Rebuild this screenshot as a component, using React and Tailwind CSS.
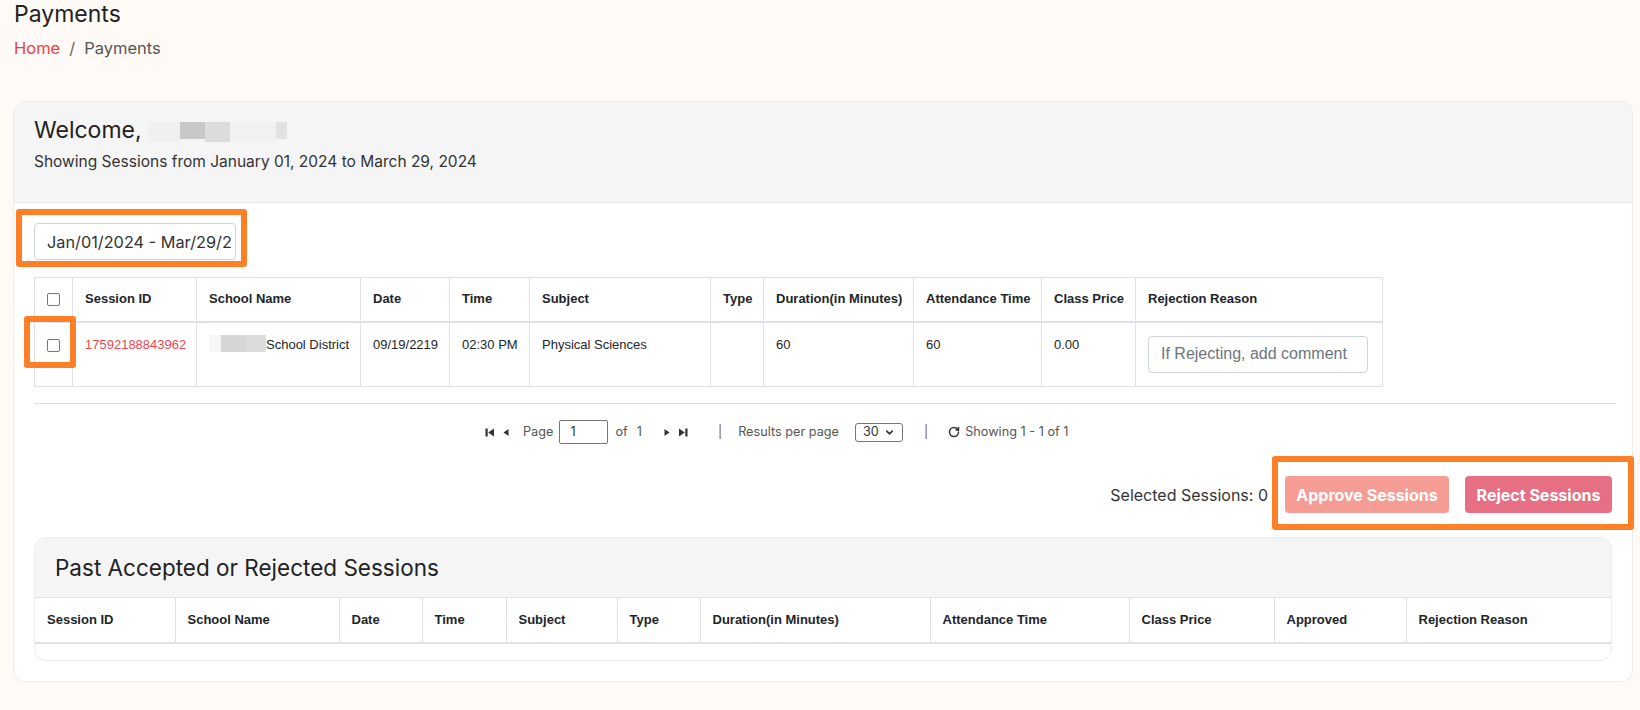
import React from 'react';
import { RotateCw, ChevronDown } from 'lucide-react';

const sessionCols = [
  { label: 'Session ID', w: 'w-[124px]' },
  { label: 'School Name', w: 'w-[164px]' },
  { label: 'Date', w: 'w-[89px]' },
  { label: 'Time', w: 'w-[80px]' },
  { label: 'Subject', w: 'w-[181px]' },
  { label: 'Type', w: 'w-[53px]' },
  { label: 'Duration(in Minutes)', w: 'w-[150px]' },
  { label: 'Attendance Time', w: 'w-[128px]' },
  { label: 'Class Price', w: 'w-[94px]' },
  { label: 'Rejection Reason', w: 'w-[247px]' },
];

const pastCols = [
  { label: 'Session ID', w: 'w-[140px]' },
  { label: 'School Name', w: 'w-[164px]' },
  { label: 'Date', w: 'w-[83px]' },
  { label: 'Time', w: 'w-[84px]' },
  { label: 'Subject', w: 'w-[111px]' },
  { label: 'Type', w: 'w-[83px]' },
  { label: 'Duration(in Minutes)', w: 'w-[230px]' },
  { label: 'Attendance Time', w: 'w-[199px]' },
  { label: 'Class Price', w: 'w-[145px]' },
  { label: 'Approved', w: 'w-[132px]' },
  { label: 'Rejection Reason', w: 'w-[205px]' },
];

const Checkbox = () => (
  <span className="inline-block w-[13px] h-[13px] border border-[#767676] rounded-[2px] bg-white align-middle" />
);

const NavIcon = ({ dir = 'left', bar = false }) => (
  <svg width="10" height="11" viewBox="0 0 10 11" className="text-[#333]">
    {dir === 'left' ? (
      <>
        {bar && <rect x="0.5" y="1.5" width="2.2" height="8" fill="currentColor" />}
        <path d={bar ? 'M9 1.5 L3.2 5.5 L9 9.5 Z' : 'M7.5 2 L2.5 5.5 L7.5 9 Z'} fill="currentColor" />
      </>
    ) : (
      <>
        {bar && <rect x="7.3" y="1.5" width="2.2" height="8" fill="currentColor" />}
        <path d={bar ? 'M1 1.5 L6.8 5.5 L1 9.5 Z' : 'M2.5 2 L7.5 5.5 L2.5 9 Z'} fill="currentColor" />
      </>
    )}
  </svg>
);

const App = () => {
  return (
    <div className="min-h-screen bg-[#fffaf6] font-['Inter',sans-serif] text-[#333] pb-6">
      {/* Page title */}
      <div className="px-[14px]">
        <h1 className="text-[23px] leading-[28px] text-[#222]">Payments</h1>
        <div className="flex items-center gap-[9px] text-[16.5px] leading-[20px] mt-[10px]">
          <span className="text-[#ef4040]">Home</span>
          <span className="text-[#666]">/</span>
          <span className="text-[#555]">Payments</span>
        </div>
      </div>

      {/* Main card */}
      <div className="ml-[13px] mt-[43px] w-[1620px] bg-white border border-[#ececec] rounded-xl">
        <div className="bg-[#f5f5f5] border-b border-[#e6e6e6] h-[101px] px-5 pt-[14px] rounded-t-xl">
          <div className="flex items-center">
            <span className="text-[23px] leading-[28px] text-[#222]">Welcome,</span>
            <div className="flex items-start ml-[6px] mt-[4px]">
              <div className="w-[32px] h-[20px] bg-[#f0f0f0]" />
              <div className="w-[25px] h-[17px] bg-[#c8c8c8]" />
              <div className="w-[25px] h-[20px] bg-[#dcdcdc]" />
              <div className="w-[46px] h-[20px] bg-[#f1f1f1]" />
              <div className="w-[11px] h-[17px] bg-[#e2e2e2]" />
            </div>
          </div>
          <p className="text-[15.5px] leading-[22px] mt-[7px] text-[#333]">
            Showing Sessions from January 01, 2024 to March 29, 2024
          </p>
        </div>

        <div className="px-5 pt-5 pb-5">
          {/* Date range */}
          <div className="relative w-[202px]">
            <input
              readOnly
              value="Jan/01/2024 - Mar/29/2024"
              className="block w-full h-[37px] border border-[#cfd4dc] rounded-[4px] pl-[12px] pr-[3px] text-[16.3px] text-[#333] bg-white outline-none"
            />
            <div className="absolute -left-[18px] -right-[11px] -top-[14px] -bottom-[7px] border-[6px] border-[#fd7f28] rounded-[3px] pointer-events-none" />
          </div>

          {/* Sessions table */}
          <div className="relative mt-[17px] w-[1348px]">
            <table className="border-collapse table-fixed w-[1348px] font-['Liberation_Sans',Arial,sans-serif] text-[13px] leading-[18px] text-[#212529]">
              <thead>
                <tr>
                  <th className="w-[38px] border border-[#dee2e6] border-b-2 h-[44px] text-center align-middle">
                    <Checkbox />
                  </th>
                  {sessionCols.map((c) => (
                    <th
                      key={c.label}
                      className={`${c.w} border border-[#dee2e6] border-b-2 px-3 h-[44px] text-left font-bold whitespace-nowrap`}
                    >
                      {c.label}
                    </th>
                  ))}
                </tr>
              </thead>
              <tbody>
                <tr>
                  <td className="border border-[#dee2e6] text-center align-top pt-[13px] h-[65px]">
                    <Checkbox />
                  </td>
                  <td className="border border-[#dee2e6] px-3 pt-[13px] align-top text-[#f0454f]">17592188843962</td>
                  <td className="border border-[#dee2e6] px-3 pt-[13px] align-top whitespace-nowrap">
                    <span className="inline-flex items-center align-middle -mt-[3px]">
                      <span className="inline-block w-[12px] h-[17px] bg-[#f6f6f6]" />
                      <span className="inline-block w-[25px] h-[17px] bg-[#d6d6d6]" />
                      <span className="inline-block w-[20px] h-[17px] bg-[#dcdcdc]" />
                    </span>
                    School District
                  </td>
                  <td className="border border-[#dee2e6] px-3 pt-[13px] align-top">09/19/2219</td>
                  <td className="border border-[#dee2e6] px-3 pt-[13px] align-top whitespace-nowrap">02:30 PM</td>
                  <td className="border border-[#dee2e6] px-3 pt-[13px] align-top">Physical Sciences</td>
                  <td className="border border-[#dee2e6] px-3 pt-[13px] align-top"></td>
                  <td className="border border-[#dee2e6] px-3 pt-[13px] align-top">60</td>
                  <td className="border border-[#dee2e6] px-3 pt-[13px] align-top">60</td>
                  <td className="border border-[#dee2e6] px-3 pt-[13px] align-top">0.00</td>
                  <td className="border border-[#dee2e6] px-3 pt-[13px] pb-[13px] align-top">
                    <input
                      placeholder="If Rejecting, add comment"
                      className="block h-[37px] w-[220px] border border-[#ced4da] rounded-[4px] px-[12px] text-[16px] text-[#333] placeholder:text-[#6c757d] bg-white outline-none font-['Liberation_Sans',Arial,sans-serif]"
                    />
                  </td>
                </tr>
              </tbody>
            </table>
            <div className="absolute -left-[10px] top-[39px] w-[52px] h-[52px] border-[6px] border-[#fd7f28] rounded-[3px] pointer-events-none" />
          </div>

          <div className="mt-4 border-t border-[#dee2e6] -mr-1" />

          {/* Pagination */}
          <div className="mt-4 pl-[451px] flex items-center text-[12.7px] text-[#555] h-[24px]">
            <div className="flex items-center gap-[6px]">
              <NavIcon dir="left" bar />
              <NavIcon dir="left" />
            </div>
            <span className="ml-[12px]">Page</span>
            <div className="ml-[6px] w-[49px] h-[24px] border border-[#767676] rounded-[2px] bg-white flex items-center px-[10px] text-[#333]">
              1
            </div>
            <span className="ml-[7px]">of</span>
            <span className="ml-[9px]">1</span>
            <div className="ml-[20px] flex items-center gap-[6px]">
              <NavIcon dir="right" />
              <NavIcon dir="right" bar />
            </div>
            <span className="ml-[30px] text-[#8a5a2b]">|</span>
            <span className="ml-[16px]">Results per page</span>
            <div className="ml-[16px] w-[48px] h-[19px] border border-[#767676] rounded-[3px] bg-white flex items-center justify-between px-[7px] text-[#333]">
              <span>30</span>
              <ChevronDown className="w-[11px] h-[11px]" strokeWidth={3.5} />
            </div>
            <span className="ml-[21px] text-[#8a5a2b]">|</span>
            <RotateCw className="ml-[20px] w-[12px] h-[12px] text-[#333]" strokeWidth={3} />
            <span className="ml-[5px]">Showing 1 - 1 of 1</span>
          </div>

          {/* Actions */}
          <div className="mt-[32px] flex items-center justify-end">
            <span className="text-[16px] text-[#333] mr-[17px]">Selected Sessions: 0</span>
            <div className="relative flex items-center gap-4">
              <button className="h-[37px] w-[164px] rounded-[4px] bg-[#f59c95] text-white font-bold text-[16px]">
                Approve Sessions
              </button>
              <button className="h-[37px] w-[147px] rounded-[4px] bg-[#e66f84] text-white font-bold text-[16px]">
                Reject Sessions
              </button>
              <div className="absolute -left-[13px] -right-[22px] -top-[20px] -bottom-[17px] border-[6px] border-[#fd7f28] rounded-[3px] pointer-events-none" />
            </div>
          </div>

          {/* Past sessions */}
          <div className="mt-[24px] border border-[#ececec] rounded-xl overflow-hidden">
            <div className="bg-[#f5f5f5] h-[59px] px-5 flex items-center">
              <h2 className="text-[22.5px] text-[#222]">Past Accepted or Rejected Sessions</h2>
            </div>
            <table className="border-collapse table-fixed w-full font-['Liberation_Sans',Arial,sans-serif] text-[13px] text-[#212529]">
              <thead>
                <tr>
                  {pastCols.map((c, i) => (
                    <th
                      key={c.label}
                      className={`${c.w} border-t border-r border-[#dee2e6] border-b-2 px-3 h-[45px] text-left font-bold whitespace-nowrap ${i === pastCols.length - 1 ? 'border-r-0' : ''}`}
                    >
                      {c.label}
                    </th>
                  ))}
                </tr>
              </thead>
            </table>
            <div className="h-[16px]" />
          </div>
        </div>
      </div>
    </div>
  );
};

export default App;
